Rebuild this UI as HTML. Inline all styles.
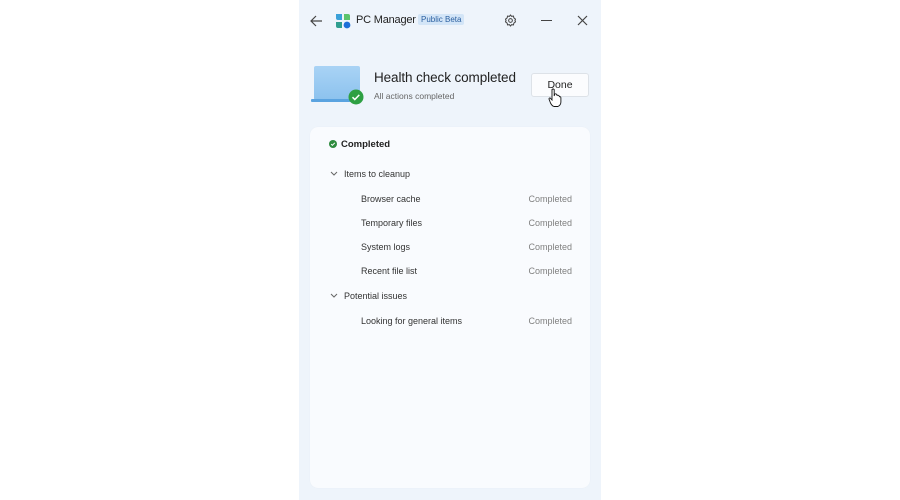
<!DOCTYPE html>
<html><head><meta charset="utf-8">
<style>
*{margin:0;padding:0;box-sizing:border-box}
html,body{width:900px;height:500px;background:#fff;overflow:hidden;font-family:"Liberation Sans",sans-serif;color:#1b1b1b}
.win{position:absolute;left:299px;top:0;width:302px;height:500px;background:#eef4fb}
.abs{position:absolute;white-space:nowrap}
.card{position:absolute;left:11px;top:127px;width:280px;height:361px;background:#f9fbfe;border-radius:8px;box-shadow:0 0 1px rgba(0,0,0,.06)}
.row{position:absolute;font-size:9px;color:#333}
.st{position:absolute;right:18px;font-size:9px;color:#808080}
</style></head><body>
<div class="win">
  <svg class="abs" style="left:10px;top:14px" width="14" height="14" viewBox="0 0 14 14"><path d="M13 7H2M7 2L2 7l5 5" fill="none" stroke="#444" stroke-width="1.2"/></svg>
  <svg class="abs" style="left:36px;top:13px" width="16" height="16" viewBox="0 0 16 16">
    <path d="M1 1h6v6H3Q1 7 1 5z" fill="#3aa0d8"/>
    <path d="M9 1h4q2 0 2 2v4H9z" fill="#5cc46c"/>
    <path d="M1 9h6v6H3q-2 0-2-2z" fill="#2f9e8f"/>
    <circle cx="12" cy="12" r="3.4" fill="#1e6fd8"/>
  </svg>
  <div class="abs" style="left:57px;top:14px;font-size:11px;letter-spacing:-0.2px;color:#222">PC Manager</div>
  <div class="abs" style="left:119px;top:14px;font-size:8px;color:#2a5fa0;background:#d3e5f7;padding:1px 3px;border-radius:2px">Public Beta</div>
  <svg class="abs" style="left:205px;top:14px" width="13" height="13" viewBox="0 0 14 14"><circle cx="7" cy="7" r="2" fill="none" stroke="#444" stroke-width="1.1"/><path d="M7 1l1.2 1.6 2-.4.4 2L12.4 5.6 11.8 7l.6 1.4-1.8 1.4-.4 2-2 -.4L7 13l-1.2-1.6-2 .4-.4-2L1.6 8.4 2.2 7l-.6-1.4 1.8-1.4.4-2 2 .4z" fill="none" stroke="#444" stroke-width="1.1" stroke-linejoin="round"/></svg>
  <div class="abs" style="left:242px;top:20px;width:11px;height:1.2px;background:#444"></div>
  <svg class="abs" style="left:278px;top:15px" width="11" height="11" viewBox="0 0 11 11"><path d="M1 1l9 9M10 1l-9 9" stroke="#444" stroke-width="1.2"/></svg>

  <div class="abs" style="left:15px;top:66px;width:46px;height:34px;background:linear-gradient(#a9d3f5,#8cc2ee);border-radius:2px"></div>
  <div class="abs" style="left:12px;top:99px;width:50px;height:3px;background:#5aa3e0;border-radius:1px"></div>
  <svg class="abs" style="left:49px;top:89px" width="16" height="16" viewBox="0 0 16 16"><circle cx="8" cy="8" r="7.5" fill="#2ea043"/><path d="M4.5 8.2l2.3 2.3 4.5-4.6" fill="none" stroke="#fff" stroke-width="1.5"/></svg>
  <div class="abs" style="left:75px;top:70px;font-size:13.5px;letter-spacing:-0.1px;color:#222">Health check completed</div>
  <div class="abs" style="left:75px;top:91px;font-size:8.5px;color:#666">All actions completed</div>
  <div class="abs" style="left:232px;top:73px;width:58px;height:24px;background:#fbfcfe;border:1px solid #dde2e8;border-radius:3px;font-size:10.5px;text-align:center;line-height:22px;color:#222">Done</div>
  <svg class="abs" style="left:249px;top:88px" width="14" height="20" viewBox="0 0 14 20"><path d="M4 1.5q1.3-1 2.2 0V8l.5-2q1.3-.6 2 .4l.4 1q1.2-.6 2 .5l.3.8q1.2-.3 1.5 1V14q0 3-3 4.5H6Q4 18 2.5 15L1 11q0-1.2 1.2-1L4 12z" fill="#fff" stroke="#111" stroke-width=".9"/></svg>

  <div class="card">
    <svg class="abs" style="left:19px;top:13px" width="8" height="8" viewBox="0 0 8 8"><circle cx="4" cy="4" r="4" fill="#2e8b3e"/><path d="M2.2 4.1l1.2 1.2 2.4-2.5" fill="none" stroke="#fff" stroke-width="1"/></svg>
    <div class="abs" style="left:31px;top:12px;font-size:9.5px;font-weight:bold;color:#222">Completed</div>
    <svg class="abs" style="left:20px;top:44px" width="8" height="6" viewBox="0 0 8 6"><path d="M1 1l3 3 3-3" fill="none" stroke="#666" stroke-width="1"/></svg>
    <div class="row" style="left:34px;top:42px">Items to cleanup</div>
    <div class="row" style="left:51px;top:67px">Browser cache</div><div class="st" style="top:67px">Completed</div>
    <div class="row" style="left:51px;top:91px">Temporary files</div><div class="st" style="top:91px">Completed</div>
    <div class="row" style="left:51px;top:115px">System logs</div><div class="st" style="top:115px">Completed</div>
    <div class="row" style="left:51px;top:139px">Recent file list</div><div class="st" style="top:139px">Completed</div>
    <svg class="abs" style="left:20px;top:166px" width="8" height="6" viewBox="0 0 8 6"><path d="M1 1l3 3 3-3" fill="none" stroke="#666" stroke-width="1"/></svg>
    <div class="row" style="left:34px;top:164px">Potential issues</div>
    <div class="row" style="left:51px;top:189px">Looking for general items</div><div class="st" style="top:189px">Completed</div>
  </div>
</div>
</body></html>
